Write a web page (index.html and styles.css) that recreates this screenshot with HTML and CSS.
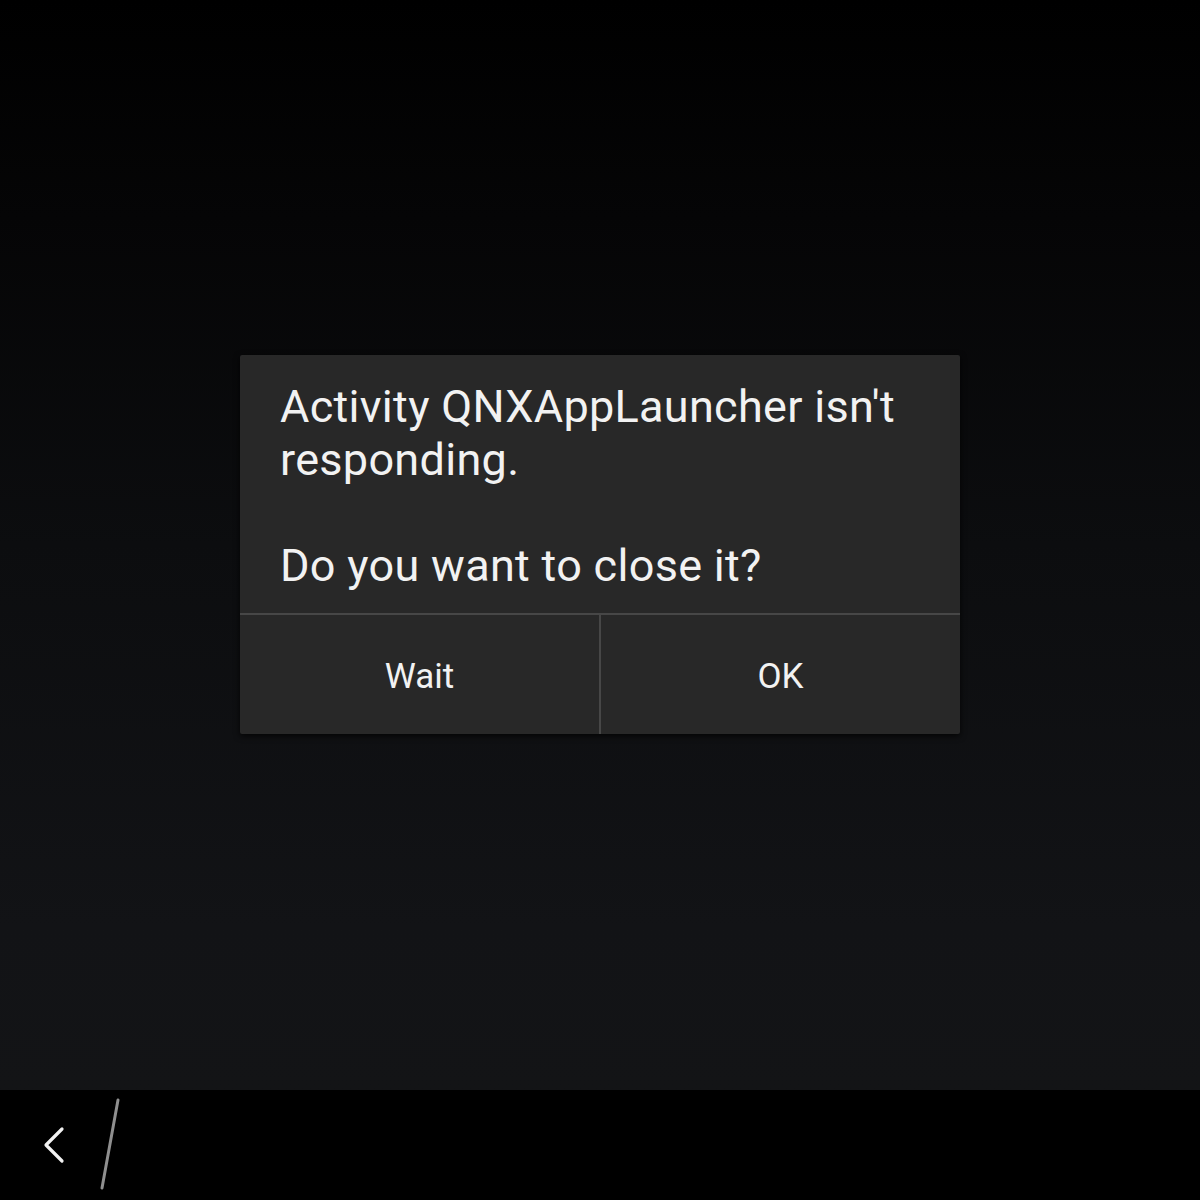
FILE: index.html
```html
<!DOCTYPE html>
<html>
<head>
<meta charset="utf-8">
<link rel="stylesheet" href="styles.css">
</head>
<body>
<div class="screen">
  <div class="stage">
    <div class="dialog">
      <div class="message">
        <p>Activity QNXAppLauncher isn't responding.</p>
        <p>Do you want to close it?</p>
      </div>
      <div class="buttons">
        <div class="btn">Wait</div>
        <div class="btn">OK</div>
      </div>
    </div>
  </div>
  <div class="navbar">
    <svg class="back" width="40" height="60" viewBox="0 0 40 60">
      <polyline points="26,14 10,30 26,46" fill="none" stroke="#f2f2f2" stroke-width="3.2" stroke-linecap="round" stroke-linejoin="round"/>
    </svg>
    <svg class="slash" width="30" height="100" viewBox="0 0 30 100">
      <line x1="22" y1="5" x2="6" y2="93" stroke="#8f8f8f" stroke-width="3" stroke-linecap="round"/>
    </svg>
  </div>
</div>
</body>
</html>
```
FILE: styles.css
```css
html, body {
  margin: 0;
  padding: 0;
  background: #000;
}
.screen {
  width: 1200px;
  height: 1200px;
  display: flex;
  flex-direction: column;
  font-family: Roboto, "Open Sans", sans-serif;
}
.stage {
  height: 1090px;
  background: linear-gradient(to bottom, #000000 0%, #050506 20%, #0c0d0f 50%, #121316 85%, #131416 100%);
  display: flex;
  justify-content: center;
  align-items: flex-start;
}
.dialog {
  margin-top: 355px;
  width: 720px;
  background: #282828;
  border-radius: 2px;
  box-shadow: 0 2px 6px rgba(0,0,0,0.8);
}
.message {
  padding: 25px 30px 21px 40px;
  color: #f2f2f2;
  font-size: 45px;
  line-height: 53px;
  letter-spacing: 0.3px;
}
.message p {
  margin: 0;
}
.message p + p {
  margin-top: 53px;
}
.buttons {
  display: flex;
  border-top: 2px solid #474747;
  height: 119px;
}
.btn {
  flex: 1;
  display: flex;
  align-items: center;
  justify-content: center;
  color: #f2f2f2;
  font-size: 35px;
  padding-top: 3px;
}
.btn + .btn {
  border-left: 2px solid #474747;
}
.navbar {
  height: 110px;
  background: #000;
  display: flex;
  align-items: center;
  padding-left: 36px;
  gap: 20px;
}
.back {
  display: block;
}
.slash {
  display: block;
}
```
